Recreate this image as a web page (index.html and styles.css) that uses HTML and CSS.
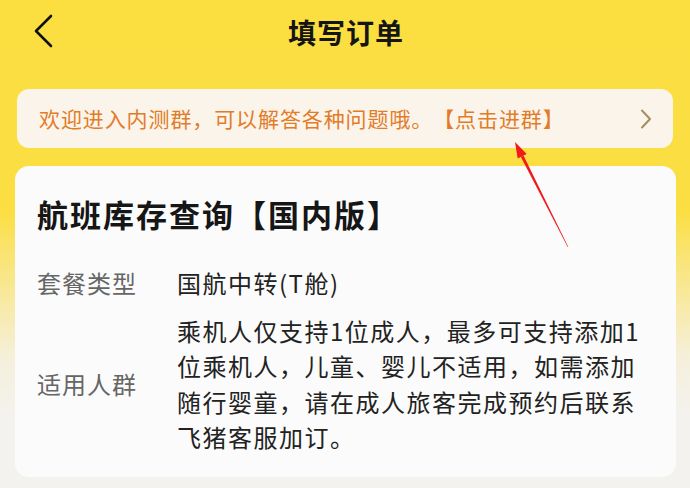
FILE: index.html
```html
<!DOCTYPE html>
<html lang="zh-CN">
<head>
<meta charset="utf-8">
<title>填写订单</title>
<link rel="stylesheet" href="styles.css">
</head>
<body>
<div class="page">
  <header class="nav">
    <svg class="back" width="24" height="36" viewBox="0 0 24 36">
      <polyline points="19,3 4,18 19,33" fill="none" stroke="#111" stroke-width="2.6" stroke-linecap="round" stroke-linejoin="round"/>
    </svg>
    <h1 class="nav-title">填写订单</h1>
  </header>

  <div class="notice">
    <span class="notice-text">欢迎进入内测群，可以解答各种问题哦。【点击进群】</span>
    <svg class="notice-arrow" width="12" height="20" viewBox="0 0 12 20">
      <polyline points="2,1.5 10,10 2,18.5" fill="none" stroke="#a98b64" stroke-width="2" stroke-linecap="round" stroke-linejoin="round"/>
    </svg>
  </div>

  <section class="card">
    <h2 class="card-title">航班库存查询【国内版】</h2>
    <div class="row">
      <div class="label">套餐类型</div>
      <div class="value">国航中转(T舱)</div>
    </div>
    <div class="row row-center">
      <div class="label">适用人群</div>
      <div class="value desc">乘机人仅支持1位成人，最多可支持添加1位乘机人，儿童、婴儿不适用，如需添加随行婴童，请在成人旅客完成预约后联系飞猪客服加订。</div>
    </div>
  </section>

  <svg class="annot" width="690" height="488" viewBox="0 0 690 488">
    <polygon points="515,142 526.7,154.1 517.7,158.6" fill="#ef1b1b"/>
    <polygon points="523.5,155.6 520.9,157.0 567.7,247.1 568.3,246.9" fill="#ef1b1b"/>
  </svg>
</div>
</body>
</html>
```

FILE: styles.css
```css
html, body {
  margin: 0;
  padding: 0;
}
body {
  width: 690px;
  height: 488px;
  overflow: hidden;
  font-family: "Noto Sans CJK SC", "Noto Sans", sans-serif;
  text-spacing-trim: space-all;
}
.page {
  position: relative;
  width: 690px;
  height: 488px;
  background: linear-gradient(180deg, #fbde40 0px, #fbde42 210px, #f8e9a2 300px, #f5f0dc 360px, #f3f2ee 420px, #f3f2ef 488px);
  overflow: hidden;
}
.nav {
  position: relative;
  height: 64px;
  display: flex;
  align-items: center;
  justify-content: center;
}
.back {
  position: absolute;
  left: 32px;
  top: 13px;
}
.nav-title {
  margin: 0;
  font-size: 28px;
  font-weight: 700;
  letter-spacing: 1px;
  color: #151515;
  line-height: 1;
  padding-left: 2px;
}
.notice {
  margin: 25px 17px 0 17px;
  height: 59px;
  border-radius: 12px;
  background: #fbf4ea;
  display: flex;
  align-items: center;
  justify-content: space-between;
  padding: 0 21px 0 22px;
}
.notice-text {
  font-size: 21px;
  letter-spacing: 0.9px;
  color: #e27c28;
  line-height: 1;
  text-spacing-trim: space-all;
}
.notice-arrow {
  display: block;
}
.card {
  margin: 18px 14px 0 15px;
  height: 311px;
  background: #fbfbfb;
  border-radius: 14px;
  padding: 26px 22px 0 22px;
  box-sizing: border-box;
}
.card-title {
  margin: 0;
  font-size: 31px;
  font-weight: 700;
  letter-spacing: 2px;
  color: #161616;
  line-height: 44px;
  text-spacing-trim: space-all;
}
.row {
  display: flex;
  align-items: flex-start;
  margin-top: 29px;
}
.row-center {
  align-items: center;
  margin-top: 12px;
}
.label {
  width: 140px;
  flex: none;
  font-size: 24px;
  letter-spacing: 1px;
  color: #666;
  line-height: 35.5px;
}
.value {
  font-size: 24px;
  letter-spacing: 1.5px;
  color: #222;
  line-height: 35.5px;
}
.desc {
  width: 470px;
}
.annot {
  position: absolute;
  left: 0;
  top: 0;
  pointer-events: none;
}
```
